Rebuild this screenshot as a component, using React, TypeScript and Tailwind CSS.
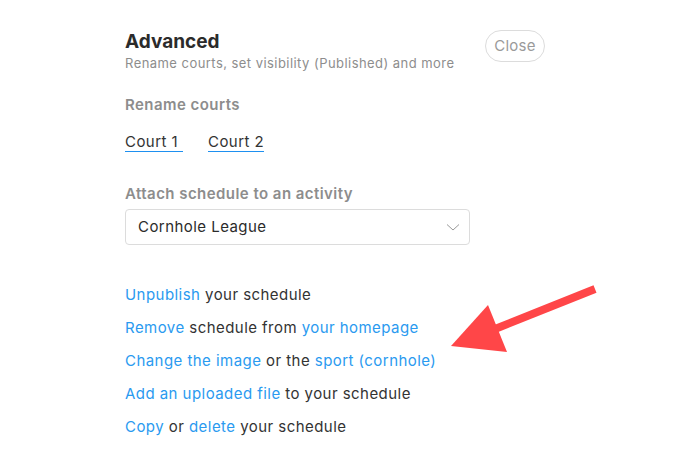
const link = "text-[#2a9af0]";
const plain = "text-[#333]";

function Row({ children }: { children: React.ReactNode }) {
  return <p className="h-[33px] leading-[33px]">{children}</p>;
}

export default function App() {
  return (
    <div
      className="relative w-[676px] h-[458px] bg-white overflow-hidden"
      style={{ fontFamily: "Inter, 'Noto Sans', sans-serif" }}
    >
      <div className="w-[420px] ml-[125px] pt-[29px]">
        <div className="flex items-start justify-between">
          <div>
            <h1 className="text-[19px] font-bold leading-[26px] text-[#2b2b2b]">Advanced</h1>
            <p className="text-[13px] leading-[16px] tracking-[0.45px] text-[#8d8d8d]">
              Rename courts, set visibility (Published) and more
            </p>
          </div>
          <button className="mt-[1px] h-[32px] w-[60px] rounded-full border border-[#dcdcdc] text-[15px] tracking-[0.3px] text-[#9a9a9a]">
            Close
          </button>
        </div>

        <h2 className="mt-[24px] text-[15px] font-semibold leading-[20px] tracking-[0.45px] text-[#8d8d8d]">
          Rename courts
        </h2>
        <div className="mt-[17px] flex gap-[25px] text-[15px] leading-[19px] tracking-[0.45px] text-[#333] whitespace-nowrap">
          <span className="w-[58px] shrink-0 border-b border-[#1e90f0]">Court 1</span>
          <span className="w-[56px] shrink-0 border-b border-[#1e90f0]">Court 2</span>
        </div>

        <h2 className="mt-[32px] text-[15px] font-semibold leading-[20px] tracking-[0.45px] text-[#8d8d8d]">
          Attach schedule to an activity
        </h2>
        <div className="mt-[5px] w-[345px] h-[36px] rounded-[4px] border border-[#dcdcdc] flex items-center justify-between pl-[12px] pr-[8px] text-[15px] tracking-[0.45px] text-[#2b2b2b]">
          <span>Cornhole League</span>
          <svg width="16" height="10" viewBox="0 0 16 10" fill="none">
            <path d="M2 2.5 L8 8 L14 2.5" stroke="#9a9a9a" strokeWidth="1" />
          </svg>
        </div>

        <div className="mt-[33px] text-[15px] tracking-[0.45px]">
          <Row>
            <span className={link}>Unpublish</span> <span className={plain}>your schedule</span>
          </Row>
          <Row>
            <span className={link}>Remove</span> <span className={plain}>schedule from</span>{" "}
            <span className={link}>your homepage</span>
          </Row>
          <Row>
            <span className={link}>Change the image</span> <span className={plain}>or the</span>{" "}
            <span className={link}>sport (cornhole)</span>
          </Row>
          <Row>
            <span className={link}>Add an uploaded file</span> <span className={plain}>to your schedule</span>
          </Row>
          <Row>
            <span className={link}>Copy</span> <span className={plain}>or</span>{" "}
            <span className={link}>delete</span> <span className={plain}>your schedule</span>
          </Row>
        </div>
      </div>

      <svg className="absolute left-0 top-0" width="676" height="458" viewBox="0 0 676 458">
        <line x1="595" y1="289" x2="490" y2="331" stroke="#ff4648" strokeWidth="8" />
        <polygon points="451,346 488,305 507,352" fill="#ff4648" />
      </svg>
    </div>
  );
}
